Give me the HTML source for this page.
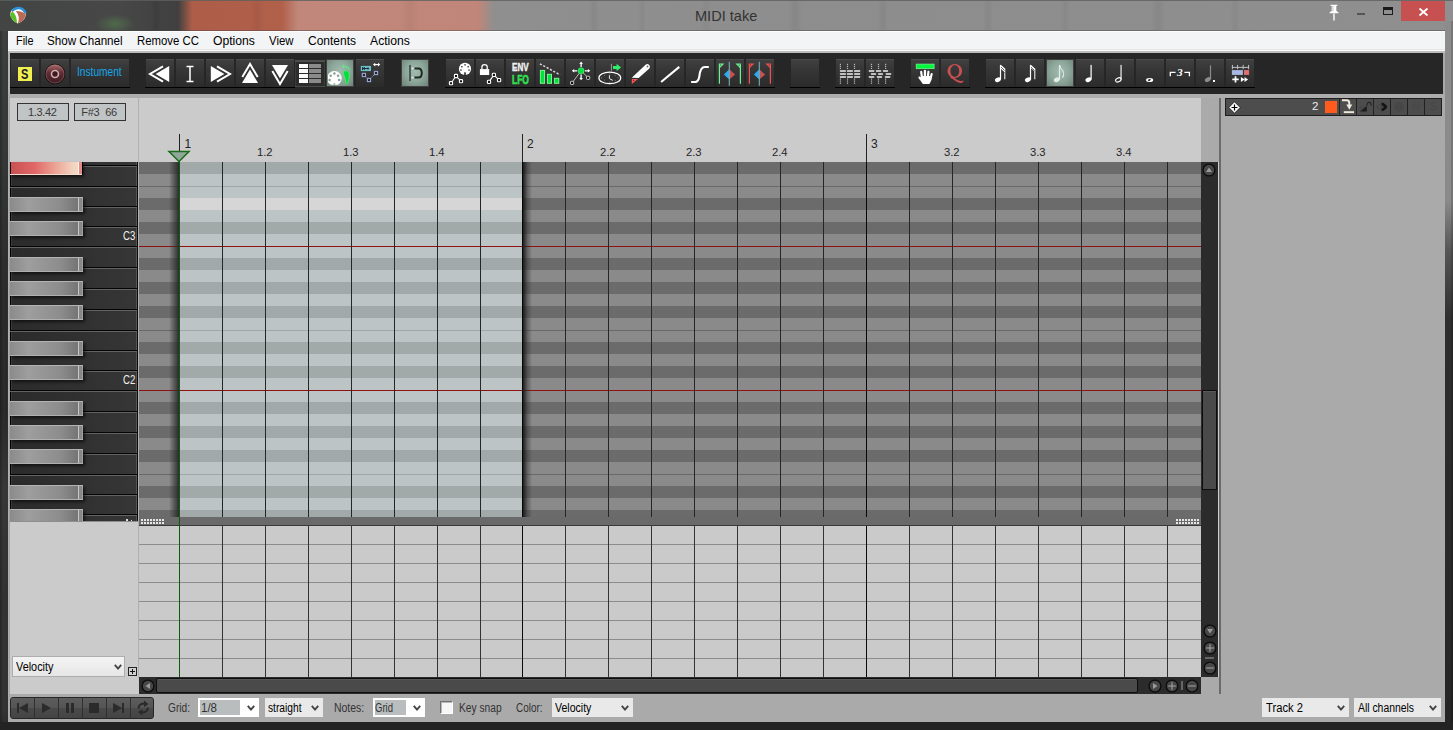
<!DOCTYPE html><html><head><meta charset="utf-8"><style>
*{margin:0;padding:0;box-sizing:border-box}
html,body{width:1453px;height:730px;overflow:hidden;background:#262626;font-family:"Liberation Sans",sans-serif}
.a{position:absolute}
.t{position:absolute;white-space:pre;line-height:1}
svg{position:absolute;overflow:visible}
.btn{position:absolute;height:28px;background:linear-gradient(#404040,#373737 35%,#2b2b2b);box-shadow:inset 0 1px 0 #4b4b4b}
.act{position:absolute;background:radial-gradient(ellipse at 50% 45%,#a3bcb0 0,#8ea79b 50%,#6d8278 100%);box-shadow:0 0 0 1px #404040}
</style></head><body><div class="a" style="left:0;top:0;width:1453px;height:31px;background:linear-gradient(90deg,#424543 0,#474747 120px,#404040 178px,#ad5d48 192px,#b1604a 282px,#c0877a 298px,#c08679 478px,#8f8f8f 494px,#8d8d8d 900px,#8f8f8f 1453px)"></div><div class="a" style="left:0;top:0;width:1453px;height:1px;background:#5c605e;opacity:.8"></div><div class="a" style="left:589px;top:1px;width:10px;height:29px;background:linear-gradient(90deg,rgba(0,0,0,0),rgba(0,0,0,0.05),rgba(0,0,0,0))"></div><div class="a" style="left:638px;top:1px;width:8px;height:29px;background:linear-gradient(90deg,rgba(0,0,0,0),rgba(0,0,0,0.04),rgba(0,0,0,0))"></div><div class="a" style="left:700px;top:1px;width:12px;height:29px;background:linear-gradient(90deg,rgba(0,0,0,0),rgba(0,0,0,0.03),rgba(0,0,0,0))"></div><div class="a" style="left:788px;top:1px;width:14px;height:29px;background:linear-gradient(90deg,rgba(0,0,0,0),rgba(0,0,0,0.05),rgba(0,0,0,0))"></div><div class="a" style="left:878px;top:1px;width:10px;height:29px;background:linear-gradient(90deg,rgba(0,0,0,0),rgba(0,0,0,0.05),rgba(0,0,0,0))"></div><div class="a" style="left:982px;top:1px;width:12px;height:29px;background:linear-gradient(90deg,rgba(0,0,0,0),rgba(0,0,0,0.04),rgba(0,0,0,0))"></div><div class="a" style="left:1060px;top:1px;width:10px;height:29px;background:linear-gradient(90deg,rgba(0,0,0,0),rgba(0,0,0,0.04),rgba(0,0,0,0))"></div><div class="a" style="left:1150px;top:1px;width:16px;height:29px;background:linear-gradient(90deg,rgba(0,0,0,0),rgba(0,0,0,0.05),rgba(0,0,0,0))"></div><div class="a" style="left:1230px;top:1px;width:10px;height:29px;background:linear-gradient(90deg,rgba(0,0,0,0),rgba(0,0,0,0.04),rgba(0,0,0,0))"></div><div class="a" style="left:150px;top:1px;width:12px;height:29px;background:linear-gradient(90deg,rgba(0,0,0,0),rgba(0,0,0,0.08),rgba(0,0,0,0))"></div><div class="a" style="left:250px;top:1px;width:14px;height:29px;background:linear-gradient(90deg,rgba(0,0,0,0),rgba(0,0,0,0.05),rgba(0,0,0,0))"></div><div class="a" style="left:400px;top:1px;width:20px;height:29px;background:linear-gradient(90deg,rgba(0,0,0,0),rgba(0,0,0,0.04),rgba(0,0,0,0))"></div><div class="a" style="left:95px;top:14px;width:40px;height:20px;border-radius:50%;background:radial-gradient(ellipse,#4f6a4a 0,rgba(70,90,70,0) 70%)"></div><div class="t" style="left:694.80px;top:8.50px;font-size:14.30px;font-family:'Liberation Sans',sans-serif;font-weight:normal;font-style:normal;color:#333;transform:scaleX(1.018);transform-origin:0 0;">MIDI take</div><svg style="left:10px;top:6.5px;" width="16" height="17" viewBox="0 0 16 17"><path d="M0.3 8 Q0.3 0.8 8 0.6 Q15.8 0.8 15.8 8 Q15 13.5 7.7 16.6 Q1 13 0.3 8Z" fill="#fff"/><path d="M1.6 4.2 Q5 0.9 8.5 1 Q13.5 1.2 15.6 6.3" stroke="#2a90d8" stroke-width="2.3" fill="none"/><path d="M0.3 8.6 Q0.6 5.5 2.3 4.6 Q6.6 7.5 7.1 16.2 Q1.2 13 0.3 8.6Z" fill="#5bbf2a"/><path d="M5.8 3.9 Q11.8 3.6 15.7 7.2 Q15 13.8 7.8 16.6 Q10.6 9.5 5.8 3.9Z" fill="#bd6a55"/><path d="M1.8 4.6 L3 4.1 L3.4 5.4Z" fill="#c87a20"/></svg><svg style="left:1326px;top:3px;" width="16" height="18" viewBox="0 0 16 18"><path d="M4.2 1.5 H11.8 V3 H10.6 V7.8 L12.8 9.6 V10.6 H3.2 V9.6 L5.4 7.8 V3 H4.2Z" fill="#fff" stroke="#777" stroke-width="0.4"/><path d="M8 10.6 V17.5" stroke="#fff" stroke-width="1.4"/><path d="M6.9 3 V8.5" stroke="#999" stroke-width="0.6"/></svg><div class="a" style="left:1357px;top:13px;width:8px;height:2px;background:#555"></div><div class="a" style="left:1383px;top:7px;width:10px;height:8px;border:1.5px solid #1a1a1a;border-top-width:3px"></div><div class="a" style="left:1401px;top:1px;width:44px;height:20px;background:#c75050"></div><svg style="left:1419px;top:7.5px;" width="9" height="8" viewBox="0 0 9 8"><path d="M0.5 0.5 L8.5 7.5 M8.5 0.5 L0.5 7.5" stroke="#fff" stroke-width="1.7"/></svg><div class="a" style="left:0px;top:31px;width:8px;height:699px;background:linear-gradient(90deg,rgba(0,0,0,.25),rgba(0,0,0,0) 40%,rgba(0,0,0,0) 75%,rgba(0,0,0,.3)),linear-gradient(#3d403e,#363937 120px,#2c2c2c 260px,#2a2a2a 380px,#383838 460px,#333 560px,#343434 680px,#2a2a2a)"></div><div class="a" style="left:7px;top:31px;width:1px;height:691px;background:rgba(255,255,255,.06)"></div><div class="a" style="left:1445px;top:21px;width:8px;height:709px;background:linear-gradient(#8c8c8c,#8a8a8a 180px,#555 230px,#2e2e2e 300px,#252525)"></div><div class="a" style="left:1451px;top:21px;width:2px;height:709px;background:rgba(0,0,0,.15)"></div><div class="a" style="left:0px;top:722px;width:1453px;height:8px;background:#232323"></div><div class="a" style="left:8px;top:31px;width:1437px;height:691px;background:#cbcbcb"></div><div class="a" style="left:8px;top:31px;width:1437px;height:18px;background:#f3f4f6"></div><div class="a" style="left:8px;top:30px;width:1437px;height:1px;background:rgba(70,70,70,.45)"></div><div class="a" style="left:8px;top:31px;width:1437px;height:1px;background:#fcfcfc"></div><div class="a" style="left:8px;top:49px;width:1437px;height:1px;background:#e6e6e6"></div><div class="a" style="left:8px;top:50px;width:1437px;height:1px;background:#fafafa"></div><div class="a" style="left:8px;top:51px;width:1437px;height:2px;background:#bdbdbd"></div><div class="t" style="left:15.60px;top:34.77px;font-size:12.20px;font-family:'Liberation Sans',sans-serif;font-weight:normal;font-style:normal;color:#000;transform:scaleX(0.890);transform-origin:0 0;">File</div><div class="t" style="left:47.00px;top:34.77px;font-size:12.20px;font-family:'Liberation Sans',sans-serif;font-weight:normal;font-style:normal;color:#000;transform:scaleX(0.954);transform-origin:0 0;">Show Channel</div><div class="t" style="left:137.00px;top:34.77px;font-size:12.20px;font-family:'Liberation Sans',sans-serif;font-weight:normal;font-style:normal;color:#000;transform:scaleX(0.933);transform-origin:0 0;">Remove CC</div><div class="t" style="left:213.00px;top:34.77px;font-size:12.20px;font-family:'Liberation Sans',sans-serif;font-weight:normal;font-style:normal;color:#000;transform:scaleX(0.999);transform-origin:0 0;">Options</div><div class="t" style="left:269.00px;top:34.77px;font-size:12.20px;font-family:'Liberation Sans',sans-serif;font-weight:normal;font-style:normal;color:#000;transform:scaleX(0.933);transform-origin:0 0;">View</div><div class="t" style="left:308.00px;top:34.77px;font-size:12.20px;font-family:'Liberation Sans',sans-serif;font-weight:normal;font-style:normal;color:#000;transform:scaleX(0.983);transform-origin:0 0;">Contents</div><div class="t" style="left:370.00px;top:34.77px;font-size:12.20px;font-family:'Liberation Sans',sans-serif;font-weight:normal;font-style:normal;color:#000;transform:scaleX(1.000);transform-origin:0 0;">Actions</div><div class="a" style="left:8px;top:53px;width:2px;height:45px;background:#b3b3b3"></div><div class="a" style="left:10px;top:53px;width:1433px;height:41px;background:#262626"></div><div class="a" style="left:1443px;top:53px;width:2px;height:45px;background:#a9a9a9"></div><div class="a" style="left:8px;top:94px;width:1437px;height:4px;background:#acacac"></div><div class="a" style="left:10px;top:87px;width:120px;height:1px;background:#000"></div><div class="btn" style="left:11px;top:59px;width:28px;height:28px"></div><div class="btn" style="left:41px;top:59px;width:28px;height:28px"></div><div class="btn" style="left:71px;top:59px;width:58px;height:28px"></div><div class="a" style="left:18px;top:67px;width:14px;height:14px;background:#f0ee50"></div><div class="t" style="left:21.10px;top:66.96px;font-size:14.11px;font-family:'Liberation Sans',sans-serif;font-weight:bold;font-style:normal;color:#1c1c28;transform:scaleX(0.786);transform-origin:0 0;">S</div><svg style="left:45px;top:63.7px;" width="20" height="20" viewBox="0 0 20 20"><defs><linearGradient id="rg1" x1="0" y1="0" x2="0" y2="1"><stop offset="0" stop-color="#a86868"/><stop offset="0.45" stop-color="#5e2c32"/><stop offset="1" stop-color="#3e1c22"/></linearGradient></defs><circle cx="10" cy="10" r="10.3" fill="#141414"/><circle cx="10" cy="10" r="9.4" fill="url(#rg1)"/><circle cx="10" cy="10" r="9" fill="none" stroke="rgba(230,160,160,.35)" stroke-width="0.8"/><circle cx="10" cy="10" r="3.5" fill="#42181e" stroke="#cfb0b0" stroke-width="1.6"/></svg><div class="t" style="left:76.90px;top:66.19px;font-size:12.65px;font-family:'Liberation Sans',sans-serif;font-weight:normal;font-style:normal;color:#14a8ea;transform:scaleX(0.804);transform-origin:0 0;">Instument</div><div class="a" style="left:145px;top:87px;width:150px;height:1px;background:#000"></div><div class="btn" style="left:146px;top:59px;width:28px;height:28px"></div><div class="btn" style="left:176px;top:59px;width:28px;height:28px"></div><div class="btn" style="left:206px;top:59px;width:28px;height:28px"></div><div class="btn" style="left:236px;top:59px;width:28px;height:28px"></div><div class="btn" style="left:266px;top:59px;width:28px;height:28px"></div><svg style="left:146px;top:59px;" width="28" height="28" viewBox="0 0 28 28"><path d="M17 7.3 L4 15 L17 22.7" stroke="#fff" stroke-width="2" fill="none"/><path d="M9.6 15 L23.2 7 L23.2 23Z" fill="#fff"/></svg><svg style="left:176px;top:59px;" width="28" height="28" viewBox="0 0 28 28"><path d="M10.5 7.6h7M10.5 22.5h7M14 7.6v14.9" stroke="#fff" stroke-width="1.5" fill="none"/></svg><svg style="left:206px;top:59px;" width="28" height="28" viewBox="0 0 28 28"><path d="M11 7.3 L24 15 L11 22.7" stroke="#fff" stroke-width="2" fill="none"/><path d="M18.4 15 L4.8 7 L4.8 23Z" fill="#fff"/></svg><svg style="left:236px;top:59px;" width="28" height="28" viewBox="0 0 28 28"><path d="M6.3 18 L14 5 L21.7 18" stroke="#fff" stroke-width="2" fill="none"/><path d="M14 10.5 L6 24 L22 24Z" fill="#fff"/></svg><svg style="left:266px;top:59px;" width="28" height="28" viewBox="0 0 28 28"><path d="M6.3 12 L14 25 L21.7 12" stroke="#fff" stroke-width="2" fill="none"/><path d="M14 19.5 L6 6 L22 6Z" fill="#fff"/></svg><div class="a" style="left:295px;top:60px;width:30px;height:27px;background:#2c2c2c;border-top:2px solid #4e4e4e;border-bottom:1px solid #4a4a4a;box-shadow:inset 1px 0 #3a3a3a,inset -1px 0 #3a3a3a"></div><div class="a" style="left:299px;top:64px;width:9px;height:4px;background:#fff"></div><div class="a" style="left:309px;top:64px;width:12px;height:4px;background:#8a8a8a"></div><div class="a" style="left:299px;top:69px;width:9px;height:4px;background:#fff"></div><div class="a" style="left:309px;top:69px;width:12px;height:4px;background:#8a8a8a"></div><div class="a" style="left:299px;top:74px;width:9px;height:4px;background:#fff"></div><div class="a" style="left:309px;top:74px;width:12px;height:4px;background:#8a8a8a"></div><div class="a" style="left:299px;top:79px;width:9px;height:4px;background:#fff"></div><div class="a" style="left:309px;top:79px;width:12px;height:4px;background:#8a8a8a"></div><div class="act" style="left:327px;top:60px;width:26px;height:26px"></div><svg style="left:327px;top:60px;" width="26" height="26" viewBox="0 0 26 26"><defs><clipPath id="cpf"><rect x="1" y="0" width="25" height="24.8"/></clipPath></defs><g clip-path="url(#cpf)"><circle cx="7.4" cy="18.4" r="7.3" fill="#fff"/><g fill="#84a092"><circle cx="7.4" cy="13.4" r="1.25"/><circle cx="3.7" cy="15.8" r="1.25"/><circle cx="11.1" cy="15.8" r="1.25"/><circle cx="2.6" cy="20" r="1.25"/><circle cx="12.2" cy="20" r="1.25"/><rect x="6.6" y="23.3" width="1.6" height="2"/></g></g><path d="M16.5 12 Q17 10.5 19.5 10.8 Q22.5 11.5 22.3 15 Q22 20 20.5 23.3 Q19.6 24.6 18.9 23.4 Q18.5 19 17.5 16.5 Q16.2 14 16.5 12Z" fill="#00e23a" stroke="#55f07a" stroke-width="0.6"/><g fill="#5ee88a"><ellipse cx="16.6" cy="6.4" rx="1.2" ry="1.8"/><ellipse cx="19.4" cy="7" rx="0.8" ry="1.4"/><ellipse cx="21.2" cy="7.9" rx="0.7" ry="1.2"/><ellipse cx="23" cy="9.2" rx="0.6" ry="1"/></g></svg><div class="btn" style="left:356px;top:59px;width:28px;height:28px"></div><svg style="left:356px;top:59px;" width="28" height="28" viewBox="0 0 28 28"><rect x="4.8" y="6.9" width="10.2" height="5.2" fill="#6cc0cc"/><path d="M6.6 9.5 h6.2 M6.6 8 v3 M8.3 8 v3" stroke="#1a2a30" stroke-width="1" fill="none"/><path d="M11.6 8 l1.8 1.5 -1.8 1.5z" fill="#1a2a30"/><path d="M18 5.6 h5.2" stroke="#fff" stroke-width="1.2"/><path d="M17 5.6 l2.2 -1.8 v3.6z M24.2 5.6 l-2.2 -1.8 v3.6z" fill="#fff"/><path d="M9.5 17.5 L11.5 19.5 M14.5 19.5 L18.5 15.5" stroke="#9aa6d8" stroke-width="1" stroke-dasharray="1 0.8"/><rect x="6.3" y="14.4" width="3.2" height="3.2" fill="#222" stroke="#9aa6d8" stroke-width="1.1"/><rect x="11.4" y="19.4" width="3.2" height="3.2" fill="#222" stroke="#9aa6d8" stroke-width="1.1"/><rect x="18.4" y="12.4" width="3.2" height="3.2" fill="#222" stroke="#9aa6d8" stroke-width="1.1"/></svg><div class="act" style="left:402px;top:60px;width:26px;height:26px"></div><svg style="left:402px;top:60px;" width="26" height="26" viewBox="0 0 26 26"><path d="M8 5v16" stroke="#3a4843" stroke-width="1.6"/><path d="M12.5 8.4 H16.5 Q19.8 8.4 19.8 13 Q19.8 17.6 16.5 17.6 H12.5" stroke="#1e2a26" stroke-width="2" fill="none"/><rect x="9.6" y="7.6" width="2" height="1.6" fill="#eee"/><rect x="9.6" y="16.8" width="2" height="1.6" fill="#eee"/></svg><div class="a" style="left:445px;top:87px;width:330px;height:1px;background:#000"></div><div class="btn" style="left:446px;top:59px;width:28px;height:28px"></div><div class="btn" style="left:476px;top:59px;width:28px;height:28px"></div><div class="btn" style="left:506px;top:59px;width:28px;height:28px"></div><div class="btn" style="left:536px;top:59px;width:28px;height:28px"></div><div class="btn" style="left:566px;top:59px;width:28px;height:28px"></div><div class="btn" style="left:596px;top:59px;width:28px;height:28px"></div><div class="btn" style="left:626px;top:59px;width:28px;height:28px"></div><div class="btn" style="left:656px;top:59px;width:28px;height:28px"></div><div class="btn" style="left:686px;top:59px;width:28px;height:28px"></div><div class="btn" style="left:716px;top:59px;width:28px;height:28px"></div><div class="btn" style="left:746px;top:59px;width:28px;height:28px"></div><svg style="left:446px;top:59px;" width="28" height="28" viewBox="0 0 28 28"><circle cx="19" cy="9.9" r="6.1" fill="#fff"/><g fill="#111"><rect x="18.4" y="5.2" width="1.3" height="1.3"/><rect x="15.2" y="7.1" width="1.3" height="1.3"/><rect x="21.5" y="7.1" width="1.3" height="1.3"/><rect x="14.3" y="10.4" width="1.3" height="1.3"/><rect x="22.4" y="10.4" width="1.3" height="1.3"/><rect x="18.3" y="13.3" width="1.4" height="3"/></g><path d="M5 24.2 L10 17 L15 22.2" stroke="#fff" stroke-width="1.1" fill="none"/><rect x="3.4" y="22.599999999999998" width="3.2" height="3.2" rx="0.8" fill="#111" stroke="#fff" stroke-width="1.1"/><rect x="8.4" y="15.4" width="3.2" height="3.2" rx="0.8" fill="#111" stroke="#fff" stroke-width="1.1"/><rect x="13.4" y="20.599999999999998" width="3.2" height="3.2" rx="0.8" fill="#111" stroke="#fff" stroke-width="1.1"/></svg><svg style="left:476px;top:59px;" width="28" height="28" viewBox="0 0 28 28"><rect x="3.9" y="10.1" width="9.3" height="5.9" fill="#fff"/><path d="M5.9 10.5 V8 Q5.9 5.6 8.55 5.6 Q11.2 5.6 11.2 8 V10.5" stroke="#fff" stroke-width="1.3" fill="none"/><path d="M13 22.9 L17.9 15.9 L23.1 21.1" stroke="#fff" stroke-width="1.1" fill="none"/><rect x="11.4" y="21.299999999999997" width="3.2" height="3.2" rx="0.8" fill="#111" stroke="#fff" stroke-width="1.1"/><rect x="16.299999999999997" y="14.3" width="3.2" height="3.2" rx="0.8" fill="#111" stroke="#fff" stroke-width="1.1"/><rect x="21.5" y="19.5" width="3.2" height="3.2" rx="0.8" fill="#111" stroke="#fff" stroke-width="1.1"/></svg><div class="t" style="left:511.50px;top:61.77px;font-size:11.49px;font-family:'Liberation Sans',sans-serif;font-weight:bold;font-style:normal;color:#f0f0f0;transform:scaleX(0.703);transform-origin:0 0;-webkit-text-stroke:0.5px #f0f0f0">ENV</div><div class="t" style="left:511.80px;top:73.56px;font-size:12.80px;font-family:'Liberation Sans',sans-serif;font-weight:bold;font-style:normal;color:#2ee050;transform:scaleX(0.660);transform-origin:0 0;-webkit-text-stroke:0.6px #2ee050">LFO</div><svg style="left:536px;top:59px;" width="28" height="28" viewBox="0 0 28 28"><path d="M3.9 4.8 L24 15.8" stroke="#d8d8d8" stroke-width="1.5" stroke-dasharray="2.2 1.6"/><rect x="4.4" y="11.4" width="4.2" height="12.9" fill="#00e23c" stroke="#7cf590" stroke-width="1"/><rect x="11.4" y="15.3" width="4.1" height="9" fill="#00e23c" stroke="#7cf590" stroke-width="1"/><rect x="18.4" y="19.3" width="4.4" height="5" fill="#00e23c" stroke="#7cf590" stroke-width="1"/></svg><svg style="left:566px;top:59px;" width="28" height="28" viewBox="0 0 28 28"><path d="M6.1 23.9 L15.1 11.8 L22.1 18.8" stroke="#bbb" stroke-width="1" fill="none"/><rect x="4.5" y="22.299999999999997" width="3.2" height="3.2" rx="0.7" fill="#111" stroke="#ccc" stroke-width="1"/><rect x="20.5" y="17.2" width="3.2" height="3.2" rx="0.7" fill="#111" stroke="#ccc" stroke-width="1"/><circle cx="15.1" cy="11.8" r="3" fill="#00e23c" stroke="#6cf08a" stroke-width="0.6"/><g stroke="#fff" stroke-width="1.3" fill="none"><path d="M15.1 8 V4.5 M15.1 15.6 V19.5 M11.3 11.8 H7.8 M18.9 11.8 H22.4"/></g><g fill="#fff"><path d="M15.1 2.6 l-1.8 2.4 h3.6z M15.1 21.3 l-1.8 -2.4 h3.6z M5.8 11.8 l2.4 -1.8 v3.6z M24.3 11.8 l-2.4 -1.8 v3.6z"/></g></svg><svg style="left:596px;top:59px;" width="28" height="28" viewBox="0 0 28 28"><ellipse cx="13.8" cy="18.9" rx="10.9" ry="5.8" fill="none" stroke="#fff" stroke-width="1.2"/><path d="M13.4 16.2 V19.6 L16.8 21.4" stroke="#fff" stroke-width="0.9" fill="none"/><g stroke="#bbb" stroke-width="0.7"><path d="M13.8 14.2v1 M13.8 22.6v1 M5.2 18.9h1 M21.4 18.9h1 M8 16.3l.7.5 M19.6 16.3l-.7.5 M8 21.5l.7-.5 M19.6 21.5l-.7-.5"/></g><path d="M15.4 4.8 V11.8" stroke="#aaa" stroke-width="0.9"/><path d="M17 6.9 H20.6 V4.8 L25.1 8.45 L20.6 12.1 V10 H17Z" fill="#2ef068"/></svg><svg style="left:626px;top:59px;" width="28" height="28" viewBox="0 0 28 28"><path d="M5.8 18.8 L19.6 5.8 Q21.5 4.3 23.2 5.9 Q24.8 7.6 23.3 9.4 L12.6 19.1Z" fill="#fff"/><circle cx="21.5" cy="7.5" r="0.9" fill="#666"/><path d="M5.8 20 H12 L5.8 25.1Z" fill="#f05a5a"/><circle cx="7.6" cy="21.4" r="0.6" fill="#c00"/></svg><svg style="left:656px;top:59px;" width="28" height="28" viewBox="0 0 28 28"><path d="M5.1 23 L23.3 7.9" stroke="#fff" stroke-width="2.1"/></svg><svg style="left:686px;top:59px;" width="28" height="28" viewBox="0 0 28 28"><path d="M5.1 23 H9.1 Q12.6 23 13.4 17 Q14.4 8 18.8 8 H22.8" stroke="#fff" stroke-width="2.1" fill="none"/></svg><svg style="left:716px;top:59px;" width="28" height="28" viewBox="0 0 28 28"><path d="M3.4 5.1v19.7 M24.4 5.1v19.7" stroke="#6cf090" stroke-width="1.2"/><path d="M2.8 4.6 h5.6 l-5 4.8Z M25 4.6 h-5.6 l5 4.8Z" fill="#6cf090"/><circle cx="4.6" cy="6" r="0.55" fill="#222"/><circle cx="23.2" cy="6" r="0.55" fill="#222"/><path d="M13.3 10.3 L7.9 15.45 L13.3 20.6Z" fill="#2ea8f0"/><path d="M13.3 10.3 L19.1 15.45 L13.3 20.6Z" fill="#c85050"/><path d="M13.3 2.7v24" stroke="#72b2b8" stroke-width="1.1"/></svg><svg style="left:746px;top:59px;" width="28" height="28" viewBox="0 0 28 28"><path d="M3.4 5.1v19.7 M24.4 5.1v19.7" stroke="#f05050" stroke-width="1.2"/><path d="M2.8 4.6 h5.6 l-5 4.8Z M25 4.6 h-5.6 l5 4.8Z" fill="#f05050"/><circle cx="4.6" cy="6" r="0.55" fill="#222"/><circle cx="23.2" cy="6" r="0.55" fill="#222"/><path d="M13.3 10.3 L7.9 15.45 L13.3 20.6Z" fill="#2ea8f0"/><path d="M13.3 10.3 L19.1 15.45 L13.3 20.6Z" fill="#c85050"/><path d="M13.3 2.7v24" stroke="#72b2b8" stroke-width="1.1"/></svg><div class="a" style="left:790px;top:87px;width:30px;height:1px;background:#000"></div><div class="btn" style="left:791px;top:59px;width:28px;height:28px"></div><div class="a" style="left:835px;top:87px;width:60px;height:1px;background:#000"></div><div class="btn" style="left:836px;top:59px;width:28px;height:28px"></div><div class="btn" style="left:866px;top:59px;width:28px;height:28px"></div><svg style="left:836px;top:59px;" width="28" height="28" viewBox="0 0 28 28"><rect x="3.8" y="4.8" width="1.2" height="1.2" fill="#b8b8b8"/><rect x="3.8" y="6.8" width="1.2" height="1.2" fill="#b8b8b8"/><rect x="3.8" y="8.8" width="1.2" height="1.2" fill="#b8b8b8"/><rect x="3.8" y="19.5" width="1.2" height="1.2" fill="#b8b8b8"/><rect x="3.8" y="21.5" width="1.2" height="1.2" fill="#b8b8b8"/><rect x="3.8" y="23.6" width="1.2" height="1.2" fill="#b8b8b8"/><rect x="10.9" y="4.8" width="1.2" height="1.2" fill="#b8b8b8"/><rect x="10.9" y="6.8" width="1.2" height="1.2" fill="#b8b8b8"/><rect x="10.9" y="8.8" width="1.2" height="1.2" fill="#b8b8b8"/><rect x="10.9" y="19.5" width="1.2" height="1.2" fill="#b8b8b8"/><rect x="10.9" y="21.5" width="1.2" height="1.2" fill="#b8b8b8"/><rect x="10.9" y="23.6" width="1.2" height="1.2" fill="#b8b8b8"/><rect x="17.9" y="4.8" width="1.2" height="1.2" fill="#b8b8b8"/><rect x="17.9" y="6.8" width="1.2" height="1.2" fill="#b8b8b8"/><rect x="17.9" y="8.8" width="1.2" height="1.2" fill="#b8b8b8"/><rect x="17.9" y="19.5" width="1.2" height="1.2" fill="#b8b8b8"/><rect x="17.9" y="21.5" width="1.2" height="1.2" fill="#b8b8b8"/><rect x="17.9" y="23.6" width="1.2" height="1.2" fill="#b8b8b8"/><rect x="3.9" y="11" width="6.1" height="2" rx="0.4" fill="#c0c0c0"/><rect x="10.9" y="11" width="6.1" height="2" rx="0.4" fill="#c0c0c0"/><rect x="18" y="11" width="6.2" height="2" rx="0.4" fill="#c0c0c0"/><rect x="3.9" y="14" width="6.1" height="2" rx="0.4" fill="#c0c0c0"/><rect x="10.9" y="14" width="6.1" height="2" rx="0.4" fill="#c0c0c0"/><rect x="18" y="14" width="6.2" height="2" rx="0.4" fill="#c0c0c0"/><rect x="3.9" y="17" width="6.1" height="2" rx="0.4" fill="#c0c0c0"/><rect x="10.9" y="17" width="6.1" height="2" rx="0.4" fill="#c0c0c0"/><rect x="18" y="17" width="6.2" height="2" rx="0.4" fill="#c0c0c0"/></svg><svg style="left:866px;top:59px;" width="28" height="28" viewBox="0 0 28 28"><rect x="4.9" y="4.8" width="1.2" height="1.2" fill="#b8b8b8"/><rect x="4.9" y="6.8" width="1.2" height="1.2" fill="#b8b8b8"/><rect x="4.9" y="8.8" width="1.2" height="1.2" fill="#b8b8b8"/><rect x="4.9" y="19.5" width="1.2" height="1.2" fill="#b8b8b8"/><rect x="4.9" y="21.5" width="1.2" height="1.2" fill="#b8b8b8"/><rect x="4.9" y="23.6" width="1.2" height="1.2" fill="#b8b8b8"/><rect x="11.9" y="4.8" width="1.2" height="1.2" fill="#b8b8b8"/><rect x="11.9" y="6.8" width="1.2" height="1.2" fill="#b8b8b8"/><rect x="11.9" y="8.8" width="1.2" height="1.2" fill="#b8b8b8"/><rect x="11.9" y="19.5" width="1.2" height="1.2" fill="#b8b8b8"/><rect x="11.9" y="21.5" width="1.2" height="1.2" fill="#b8b8b8"/><rect x="11.9" y="23.6" width="1.2" height="1.2" fill="#b8b8b8"/><rect x="19.0" y="4.8" width="1.2" height="1.2" fill="#b8b8b8"/><rect x="19.0" y="6.8" width="1.2" height="1.2" fill="#b8b8b8"/><rect x="19.0" y="8.8" width="1.2" height="1.2" fill="#b8b8b8"/><rect x="19.0" y="19.5" width="1.2" height="1.2" fill="#b8b8b8"/><rect x="19.0" y="21.5" width="1.2" height="1.2" fill="#b8b8b8"/><rect x="19.0" y="23.6" width="1.2" height="1.2" fill="#b8b8b8"/><rect x="2.8" y="11" width="5.5" height="2" rx="0.4" fill="#c0c0c0"/><rect x="9.9" y="11" width="5.3" height="2" rx="0.4" fill="#c0c0c0"/><rect x="16.9" y="11" width="5.2" height="2" rx="0.4" fill="#c0c0c0"/><rect x="4.9" y="14" width="5.2" height="2" rx="0.4" fill="#c0c0c0"/><rect x="12" y="14" width="5.0" height="2" rx="0.4" fill="#c0c0c0"/><rect x="19.8" y="14" width="5.4" height="2" rx="0.4" fill="#c0c0c0"/><rect x="2.8" y="17" width="5.5" height="2" rx="0.4" fill="#c0c0c0"/><rect x="10.8" y="17" width="5.3" height="2" rx="0.4" fill="#c0c0c0"/><rect x="18.9" y="17" width="5.4" height="2" rx="0.4" fill="#c0c0c0"/></svg><div class="a" style="left:910px;top:87px;width:60px;height:1px;background:#000"></div><div class="btn" style="left:911px;top:59px;width:28px;height:28px"></div><div class="btn" style="left:941px;top:59px;width:28px;height:28px"></div><svg style="left:911px;top:59px;" width="28" height="28" viewBox="0 0 28 28"><rect x="5.2" y="5.1" width="17.9" height="4.6" fill="#00f83c" stroke="#7af598" stroke-width="0.7"/><g fill="#fff"><rect x="9.5" y="11.8" width="2.2" height="10" rx="1.1" transform="rotate(-8 10.6 16)"/><rect x="12.8" y="10.8" width="2.3" height="10" rx="1.15"/><rect x="16" y="11.6" width="2.2" height="10" rx="1.1" transform="rotate(6 17 16)"/><rect x="18.9" y="14" width="2.1" height="8" rx="1.05" transform="rotate(14 20 18)"/><path d="M10 17 H20.5 Q20.8 21 19.5 23 L18.4 25 H12 Q10.5 23.5 9.8 22 L7.6 19.2 Q7 18 8 17.6 Q9 17.3 10 18.3Z"/></g></svg><svg style="left:941px;top:59px;" width="28" height="28" viewBox="0 0 28 28"><path fill-rule="evenodd" fill="#c85050" d="M13.8 5.1 A7.3 6.9 0 1 1 13.79 5.1Z M13.8 6.1 A4.4 5.9 0 1 0 13.81 6.1Z"/><path d="M9.6 17.8 Q11.8 18.6 13.6 20.2 Q16.5 22.6 19.5 23 Q21 23.2 22 22" stroke="#c85050" stroke-width="1.8" fill="none"/></svg><div class="a" style="left:985px;top:87px;width:270px;height:1px;background:#000"></div><div class="btn" style="left:986px;top:59px;width:28px;height:28px"></div><div class="btn" style="left:1016px;top:59px;width:28px;height:28px"></div><div class="btn" style="left:1076px;top:59px;width:28px;height:28px"></div><div class="btn" style="left:1106px;top:59px;width:28px;height:28px"></div><div class="btn" style="left:1136px;top:59px;width:28px;height:28px"></div><div class="btn" style="left:1166px;top:59px;width:28px;height:28px"></div><div class="btn" style="left:1196px;top:59px;width:28px;height:28px"></div><div class="btn" style="left:1226px;top:59px;width:28px;height:28px"></div><div class="act" style="left:1047px;top:60px;width:26px;height:26px"></div><svg style="left:986px;top:59px;" width="28" height="28" viewBox="0 0 28 28"><ellipse cx="11.9" cy="20.8" rx="3.1" ry="2.15" transform="rotate(-25 11.9 20.8)" fill="#fff"/><rect x="13.9" y="5.9" width="1.2" height="14.6" fill="#fff"/><path d="M15 5.9 L19.3 9.8 V20.2 H18.3 V13.2 L15 10.4Z" fill="#fff"/><path d="M15 8.1 L18.6 11.5 M15 10.3 L18.6 13.7" stroke="#333" stroke-width="0.8"/></svg><svg style="left:1016px;top:59px;" width="28" height="28" viewBox="0 0 28 28"><ellipse cx="11.9" cy="20.8" rx="3.1" ry="2.15" transform="rotate(-25 11.9 20.8)" fill="#fff"/><rect x="13.9" y="5.9" width="1.2" height="14.6" fill="#fff"/><path d="M15 5.9 L19.3 9.8 V20.2 H18.3 V12.2 L15 9.2Z" fill="#fff"/><path d="M15 8.3 L18.6 11.6" stroke="#333" stroke-width="0.8"/></svg><svg style="left:1046px;top:59px;" width="28" height="28" viewBox="0 0 28 28"><ellipse cx="10.8" cy="20.8" rx="3.1" ry="2.15" transform="rotate(-25 10.8 20.8)" fill="#e2ede8"/><rect x="12.9" y="6" width="1.2" height="14.6" fill="#e2ede8"/><path d="M13.6 6.2 Q14.2 9.2 16.4 11.3 Q18.4 13.3 17.6 16.3 Q17.2 17.6 16.3 18.6" stroke="#e2ede8" stroke-width="1.1" fill="none"/></svg><svg style="left:1076px;top:59px;" width="28" height="28" viewBox="0 0 28 28"><ellipse cx="12.4" cy="20.8" rx="3.1" ry="2.15" transform="rotate(-25 12.4 20.8)" fill="#fff"/><rect x="14.5" y="5.9" width="1.2" height="14.6" fill="#fff"/></svg><svg style="left:1106px;top:59px;" width="28" height="28" viewBox="0 0 28 28"><ellipse cx="12.3" cy="20.9" rx="2.9" ry="1.9" transform="rotate(-25 12.3 20.9)" fill="none" stroke="#fff" stroke-width="1.1"/><rect x="14.5" y="5.9" width="1.1" height="14.6" fill="#fff"/></svg><svg style="left:1136px;top:59px;" width="28" height="28" viewBox="0 0 28 28"><ellipse cx="13.6" cy="21" rx="3.6" ry="2.1" fill="#fff"/><ellipse cx="13.3" cy="21" rx="1.6" ry="1" transform="rotate(-30 13.3 21)" fill="#333"/></svg><svg style="left:1196px;top:59px;" width="28" height="28" viewBox="0 0 28 28"><ellipse cx="11.8" cy="20.6" rx="3.1" ry="2.15" transform="rotate(-25 11.8 20.6)" fill="#8c8c8c"/><rect x="13.9" y="6.3" width="1.2" height="14" fill="#8c8c8c"/><rect x="17" y="21" width="2" height="2" fill="#fff"/></svg><svg style="left:1166px;top:59px;" width="28" height="28" viewBox="0 0 28 28"><path d="M4.3 17.2 V13.4 H9.6 M23.4 17.2 V13.4 H18.4" stroke="#fff" stroke-width="1.3" fill="none"/></svg><div class="t" style="left:1177.01px;top:67.50px;font-size:9.92px;font-family:'Liberation Serif',serif;font-weight:bold;font-style:italic;color:#fff;transform:scaleX(1.146);transform-origin:0 0;">3</div><svg style="left:1226px;top:59px;" width="28" height="28" viewBox="0 0 28 28"><path d="M5.9 8.4 H23.1 M6.4 5.9 V10.2 M11.6 5.9 V10.2 M17.2 5.9 V10.2 M22.6 5.9 V10.2" stroke="#c0c0c0" stroke-width="1"/><rect x="5.9" y="11.1" width="11" height="4.8" fill="#a8b8e0"/><rect x="18" y="11.1" width="5.1" height="4.8" fill="#e07070"/><path d="M9.5 17.2 V23.6 M6.3 20.4 H12.7" stroke="#fff" stroke-width="1.7"/><path d="M14.9 17.9 L18.5 20.4 L14.9 22.9Z M18.5 17.9 L22.1 20.4 L18.5 22.9Z" fill="#fff"/></svg><div class="a" style="left:17px;top:103px;width:52px;height:18px;background:#c0c4c4;border:1px solid #333"></div><div class="t" style="left:27.90px;top:106.69px;font-size:11px;color:#3a3a3a;letter-spacing:-0.317px;">1.3.42</div><div class="a" style="left:74px;top:103px;width:52px;height:18px;background:#c0c4c4;border:1px solid #333"></div><div class="t" style="left:81.20px;top:106.69px;font-size:11px;color:#3a3a3a;letter-spacing:-0.217px;">F#3  66</div><div class="a" style="left:138px;top:98px;width:1px;height:580px;background:#b0b0b0"></div><div class="a" style="left:8px;top:98px;width:2px;height:596px;background:linear-gradient(90deg,#b4b4b4,#a2a2a2)"></div><div class="a" style="left:1201px;top:98px;width:18px;height:64px;background:#aaaaaa"></div><div class="a" style="left:1219px;top:98px;width:2px;height:596px;background:#6b6b6b"></div><div class="a" style="left:1221px;top:98px;width:224px;height:624px;background:#aaaaaa"></div><div class="a" style="left:179px;top:134px;width:1px;height:28px;background:#222"></div><div class="a" style="left:522px;top:134px;width:1px;height:28px;background:#222"></div><div class="a" style="left:866px;top:134px;width:1px;height:28px;background:#222"></div><div class="t" style="left:184.50px;top:137.84px;font-size:12px;color:#222;letter-spacing:0.000px;">1</div><div class="t" style="left:527.00px;top:137.84px;font-size:12px;color:#222;letter-spacing:0.000px;">2</div><div class="t" style="left:871.00px;top:137.84px;font-size:12px;color:#222;letter-spacing:0.000px;">3</div><div class="t" style="left:256.88px;top:148.23px;font-size:10.47px;font-family:'Liberation Sans',sans-serif;font-weight:normal;font-style:normal;color:#262626;transform:scaleX(1.072);transform-origin:0 0;">1.2</div><div class="t" style="left:342.75px;top:148.23px;font-size:10.47px;font-family:'Liberation Sans',sans-serif;font-weight:normal;font-style:normal;color:#262626;transform:scaleX(1.072);transform-origin:0 0;">1.3</div><div class="t" style="left:428.62px;top:148.23px;font-size:10.47px;font-family:'Liberation Sans',sans-serif;font-weight:normal;font-style:normal;color:#262626;transform:scaleX(1.072);transform-origin:0 0;">1.4</div><div class="t" style="left:600.38px;top:148.23px;font-size:10.47px;font-family:'Liberation Sans',sans-serif;font-weight:normal;font-style:normal;color:#262626;transform:scaleX(1.072);transform-origin:0 0;">2.2</div><div class="t" style="left:686.25px;top:148.23px;font-size:10.47px;font-family:'Liberation Sans',sans-serif;font-weight:normal;font-style:normal;color:#262626;transform:scaleX(1.072);transform-origin:0 0;">2.3</div><div class="t" style="left:772.12px;top:148.23px;font-size:10.47px;font-family:'Liberation Sans',sans-serif;font-weight:normal;font-style:normal;color:#262626;transform:scaleX(1.072);transform-origin:0 0;">2.4</div><div class="t" style="left:943.88px;top:148.23px;font-size:10.47px;font-family:'Liberation Sans',sans-serif;font-weight:normal;font-style:normal;color:#262626;transform:scaleX(1.072);transform-origin:0 0;">3.2</div><div class="t" style="left:1029.75px;top:148.23px;font-size:10.47px;font-family:'Liberation Sans',sans-serif;font-weight:normal;font-style:normal;color:#262626;transform:scaleX(1.072);transform-origin:0 0;">3.3</div><div class="t" style="left:1115.62px;top:148.23px;font-size:10.47px;font-family:'Liberation Sans',sans-serif;font-weight:normal;font-style:normal;color:#262626;transform:scaleX(1.072);transform-origin:0 0;">3.4</div><div class="a" style="left:139px;top:162px;width:40px;height:12px;background:#6b6b6b"></div><div class="a" style="left:179px;top:162px;width:344px;height:12px;background:#a1a9a9"></div><div class="a" style="left:523px;top:162px;width:678px;height:12px;background:#6b6b6b"></div><div class="a" style="left:139px;top:174px;width:40px;height:12px;background:#8a8a8a"></div><div class="a" style="left:179px;top:174px;width:344px;height:12px;background:#bcc4c5"></div><div class="a" style="left:523px;top:174px;width:678px;height:12px;background:#8a8a8a"></div><div class="a" style="left:139px;top:186px;width:40px;height:12px;background:#8a8a8a"></div><div class="a" style="left:179px;top:186px;width:344px;height:12px;background:#bcc4c5"></div><div class="a" style="left:523px;top:186px;width:678px;height:12px;background:#8a8a8a"></div><div class="a" style="left:139px;top:198px;width:40px;height:12px;background:#6b6b6b"></div><div class="a" style="left:179px;top:198px;width:344px;height:12px;background:#d6d6d6"></div><div class="a" style="left:523px;top:198px;width:678px;height:12px;background:#6b6b6b"></div><div class="a" style="left:139px;top:210px;width:40px;height:12px;background:#8a8a8a"></div><div class="a" style="left:179px;top:210px;width:344px;height:12px;background:#bcc4c5"></div><div class="a" style="left:523px;top:210px;width:678px;height:12px;background:#8a8a8a"></div><div class="a" style="left:139px;top:222px;width:40px;height:12px;background:#6b6b6b"></div><div class="a" style="left:179px;top:222px;width:344px;height:12px;background:#a1a9a9"></div><div class="a" style="left:523px;top:222px;width:678px;height:12px;background:#6b6b6b"></div><div class="a" style="left:139px;top:234px;width:40px;height:12px;background:#8a8a8a"></div><div class="a" style="left:179px;top:234px;width:344px;height:12px;background:#bcc4c5"></div><div class="a" style="left:523px;top:234px;width:678px;height:12px;background:#8a8a8a"></div><div class="a" style="left:139px;top:246px;width:40px;height:12px;background:#8a8a8a"></div><div class="a" style="left:179px;top:246px;width:344px;height:12px;background:#bcc4c5"></div><div class="a" style="left:523px;top:246px;width:678px;height:12px;background:#8a8a8a"></div><div class="a" style="left:139px;top:258px;width:40px;height:12px;background:#6b6b6b"></div><div class="a" style="left:179px;top:258px;width:344px;height:12px;background:#a1a9a9"></div><div class="a" style="left:523px;top:258px;width:678px;height:12px;background:#6b6b6b"></div><div class="a" style="left:139px;top:270px;width:40px;height:12px;background:#8a8a8a"></div><div class="a" style="left:179px;top:270px;width:344px;height:12px;background:#bcc4c5"></div><div class="a" style="left:523px;top:270px;width:678px;height:12px;background:#8a8a8a"></div><div class="a" style="left:139px;top:282px;width:40px;height:12px;background:#6b6b6b"></div><div class="a" style="left:179px;top:282px;width:344px;height:12px;background:#a1a9a9"></div><div class="a" style="left:523px;top:282px;width:678px;height:12px;background:#6b6b6b"></div><div class="a" style="left:139px;top:294px;width:40px;height:12px;background:#8a8a8a"></div><div class="a" style="left:179px;top:294px;width:344px;height:12px;background:#bcc4c5"></div><div class="a" style="left:523px;top:294px;width:678px;height:12px;background:#8a8a8a"></div><div class="a" style="left:139px;top:306px;width:40px;height:12px;background:#6b6b6b"></div><div class="a" style="left:179px;top:306px;width:344px;height:12px;background:#a1a9a9"></div><div class="a" style="left:523px;top:306px;width:678px;height:12px;background:#6b6b6b"></div><div class="a" style="left:139px;top:318px;width:40px;height:12px;background:#8a8a8a"></div><div class="a" style="left:179px;top:318px;width:344px;height:12px;background:#bcc4c5"></div><div class="a" style="left:523px;top:318px;width:678px;height:12px;background:#8a8a8a"></div><div class="a" style="left:139px;top:330px;width:40px;height:12px;background:#8a8a8a"></div><div class="a" style="left:179px;top:330px;width:344px;height:12px;background:#bcc4c5"></div><div class="a" style="left:523px;top:330px;width:678px;height:12px;background:#8a8a8a"></div><div class="a" style="left:139px;top:342px;width:40px;height:12px;background:#6b6b6b"></div><div class="a" style="left:179px;top:342px;width:344px;height:12px;background:#a1a9a9"></div><div class="a" style="left:523px;top:342px;width:678px;height:12px;background:#6b6b6b"></div><div class="a" style="left:139px;top:354px;width:40px;height:12px;background:#8a8a8a"></div><div class="a" style="left:179px;top:354px;width:344px;height:12px;background:#bcc4c5"></div><div class="a" style="left:523px;top:354px;width:678px;height:12px;background:#8a8a8a"></div><div class="a" style="left:139px;top:366px;width:40px;height:12px;background:#6b6b6b"></div><div class="a" style="left:179px;top:366px;width:344px;height:12px;background:#a1a9a9"></div><div class="a" style="left:523px;top:366px;width:678px;height:12px;background:#6b6b6b"></div><div class="a" style="left:139px;top:378px;width:40px;height:12px;background:#8a8a8a"></div><div class="a" style="left:179px;top:378px;width:344px;height:12px;background:#bcc4c5"></div><div class="a" style="left:523px;top:378px;width:678px;height:12px;background:#8a8a8a"></div><div class="a" style="left:139px;top:390px;width:40px;height:12px;background:#8a8a8a"></div><div class="a" style="left:179px;top:390px;width:344px;height:12px;background:#bcc4c5"></div><div class="a" style="left:523px;top:390px;width:678px;height:12px;background:#8a8a8a"></div><div class="a" style="left:139px;top:402px;width:40px;height:12px;background:#6b6b6b"></div><div class="a" style="left:179px;top:402px;width:344px;height:12px;background:#a1a9a9"></div><div class="a" style="left:523px;top:402px;width:678px;height:12px;background:#6b6b6b"></div><div class="a" style="left:139px;top:414px;width:40px;height:12px;background:#8a8a8a"></div><div class="a" style="left:179px;top:414px;width:344px;height:12px;background:#bcc4c5"></div><div class="a" style="left:523px;top:414px;width:678px;height:12px;background:#8a8a8a"></div><div class="a" style="left:139px;top:426px;width:40px;height:12px;background:#6b6b6b"></div><div class="a" style="left:179px;top:426px;width:344px;height:12px;background:#a1a9a9"></div><div class="a" style="left:523px;top:426px;width:678px;height:12px;background:#6b6b6b"></div><div class="a" style="left:139px;top:438px;width:40px;height:12px;background:#8a8a8a"></div><div class="a" style="left:179px;top:438px;width:344px;height:12px;background:#bcc4c5"></div><div class="a" style="left:523px;top:438px;width:678px;height:12px;background:#8a8a8a"></div><div class="a" style="left:139px;top:450px;width:40px;height:12px;background:#6b6b6b"></div><div class="a" style="left:179px;top:450px;width:344px;height:12px;background:#a1a9a9"></div><div class="a" style="left:523px;top:450px;width:678px;height:12px;background:#6b6b6b"></div><div class="a" style="left:139px;top:462px;width:40px;height:12px;background:#8a8a8a"></div><div class="a" style="left:179px;top:462px;width:344px;height:12px;background:#bcc4c5"></div><div class="a" style="left:523px;top:462px;width:678px;height:12px;background:#8a8a8a"></div><div class="a" style="left:139px;top:474px;width:40px;height:12px;background:#8a8a8a"></div><div class="a" style="left:179px;top:474px;width:344px;height:12px;background:#bcc4c5"></div><div class="a" style="left:523px;top:474px;width:678px;height:12px;background:#8a8a8a"></div><div class="a" style="left:139px;top:486px;width:40px;height:12px;background:#6b6b6b"></div><div class="a" style="left:179px;top:486px;width:344px;height:12px;background:#a1a9a9"></div><div class="a" style="left:523px;top:486px;width:678px;height:12px;background:#6b6b6b"></div><div class="a" style="left:139px;top:498px;width:40px;height:12px;background:#8a8a8a"></div><div class="a" style="left:179px;top:498px;width:344px;height:12px;background:#bcc4c5"></div><div class="a" style="left:523px;top:498px;width:678px;height:12px;background:#8a8a8a"></div><div class="a" style="left:139px;top:510px;width:40px;height:7px;background:#6b6b6b"></div><div class="a" style="left:179px;top:510px;width:344px;height:7px;background:#a1a9a9"></div><div class="a" style="left:523px;top:510px;width:678px;height:7px;background:#6b6b6b"></div><div class="a" style="left:139px;top:186px;width:40px;height:1px;background:#686868"></div><div class="a" style="left:179px;top:186px;width:344px;height:1px;background:#9ea6a7"></div><div class="a" style="left:523px;top:186px;width:678px;height:1px;background:#686868"></div><div class="a" style="left:139px;top:246px;width:1062px;height:1px;background:#8e1212"></div><div class="a" style="left:139px;top:330px;width:40px;height:1px;background:#686868"></div><div class="a" style="left:179px;top:330px;width:344px;height:1px;background:#9ea6a7"></div><div class="a" style="left:523px;top:330px;width:678px;height:1px;background:#686868"></div><div class="a" style="left:139px;top:390px;width:1062px;height:1px;background:#8e1212"></div><div class="a" style="left:139px;top:474px;width:40px;height:1px;background:#686868"></div><div class="a" style="left:179px;top:474px;width:344px;height:1px;background:#9ea6a7"></div><div class="a" style="left:523px;top:474px;width:678px;height:1px;background:#686868"></div><div class="a" style="left:169px;top:162px;width:10px;height:355px;background:linear-gradient(90deg,rgba(45,45,45,0),rgba(45,45,45,.5) 50%,rgba(40,40,40,.95))"></div><div class="a" style="left:523px;top:162px;width:9px;height:355px;background:linear-gradient(90deg,rgba(25,25,25,.95),rgba(40,40,40,.4) 50%,rgba(40,40,40,0))"></div><div class="a" style="left:222px;top:162px;width:1px;height:355px;background:#262626"></div><div class="a" style="left:265px;top:162px;width:1px;height:355px;background:#262626"></div><div class="a" style="left:308px;top:162px;width:1px;height:355px;background:#262626"></div><div class="a" style="left:351px;top:162px;width:1px;height:355px;background:#262626"></div><div class="a" style="left:394px;top:162px;width:1px;height:355px;background:#262626"></div><div class="a" style="left:437px;top:162px;width:1px;height:355px;background:#262626"></div><div class="a" style="left:480px;top:162px;width:1px;height:355px;background:#262626"></div><div class="a" style="left:522px;top:162px;width:1px;height:355px;background:#050505"></div><div class="a" style="left:565px;top:162px;width:1px;height:355px;background:#262626"></div><div class="a" style="left:608px;top:162px;width:1px;height:355px;background:#262626"></div><div class="a" style="left:651px;top:162px;width:1px;height:355px;background:#262626"></div><div class="a" style="left:694px;top:162px;width:1px;height:355px;background:#262626"></div><div class="a" style="left:737px;top:162px;width:1px;height:355px;background:#262626"></div><div class="a" style="left:780px;top:162px;width:1px;height:355px;background:#262626"></div><div class="a" style="left:823px;top:162px;width:1px;height:355px;background:#262626"></div><div class="a" style="left:866px;top:162px;width:1px;height:355px;background:#080808"></div><div class="a" style="left:909px;top:162px;width:1px;height:355px;background:#262626"></div><div class="a" style="left:952px;top:162px;width:1px;height:355px;background:#262626"></div><div class="a" style="left:995px;top:162px;width:1px;height:355px;background:#262626"></div><div class="a" style="left:1038px;top:162px;width:1px;height:355px;background:#262626"></div><div class="a" style="left:1081px;top:162px;width:1px;height:355px;background:#262626"></div><div class="a" style="left:1124px;top:162px;width:1px;height:355px;background:#262626"></div><div class="a" style="left:1167px;top:162px;width:1px;height:355px;background:#262626"></div><svg style="left:168px;top:150px;" width="23" height="13" viewBox="0 0 23 13"><path d="M1 1.5 H21 L11 11.5Z" fill="#8fa89a" stroke="#1c6a1c" stroke-width="1.5"/></svg><div class="a" style="left:139px;top:517px;width:1062px;height:9px;background:#6a6a6a;border-bottom:1px solid #3a3a3a"></div><svg style="left:141px;top:519px;" width="24" height="5" viewBox="0 0 24 5"><rect x="0" y="0" width="2" height="2" fill="#e8e8e8"/><rect x="3" y="0" width="2" height="2" fill="#e8e8e8"/><rect x="6" y="0" width="2" height="2" fill="#e8e8e8"/><rect x="9" y="0" width="2" height="2" fill="#e8e8e8"/><rect x="12" y="0" width="2" height="2" fill="#e8e8e8"/><rect x="15" y="0" width="2" height="2" fill="#e8e8e8"/><rect x="18" y="0" width="2" height="2" fill="#e8e8e8"/><rect x="21" y="0" width="2" height="2" fill="#e8e8e8"/><rect x="0" y="3" width="2" height="2" fill="#e8e8e8"/><rect x="3" y="3" width="2" height="2" fill="#e8e8e8"/><rect x="6" y="3" width="2" height="2" fill="#e8e8e8"/><rect x="9" y="3" width="2" height="2" fill="#e8e8e8"/><rect x="12" y="3" width="2" height="2" fill="#e8e8e8"/><rect x="15" y="3" width="2" height="2" fill="#e8e8e8"/><rect x="18" y="3" width="2" height="2" fill="#e8e8e8"/><rect x="21" y="3" width="2" height="2" fill="#e8e8e8"/></svg><svg style="left:1176px;top:519px;" width="24" height="5" viewBox="0 0 24 5"><rect x="0" y="0" width="2" height="2" fill="#e8e8e8"/><rect x="3" y="0" width="2" height="2" fill="#e8e8e8"/><rect x="6" y="0" width="2" height="2" fill="#e8e8e8"/><rect x="9" y="0" width="2" height="2" fill="#e8e8e8"/><rect x="12" y="0" width="2" height="2" fill="#e8e8e8"/><rect x="15" y="0" width="2" height="2" fill="#e8e8e8"/><rect x="18" y="0" width="2" height="2" fill="#e8e8e8"/><rect x="21" y="0" width="2" height="2" fill="#e8e8e8"/><rect x="0" y="3" width="2" height="2" fill="#e8e8e8"/><rect x="3" y="3" width="2" height="2" fill="#e8e8e8"/><rect x="6" y="3" width="2" height="2" fill="#e8e8e8"/><rect x="9" y="3" width="2" height="2" fill="#e8e8e8"/><rect x="12" y="3" width="2" height="2" fill="#e8e8e8"/><rect x="15" y="3" width="2" height="2" fill="#e8e8e8"/><rect x="18" y="3" width="2" height="2" fill="#e8e8e8"/><rect x="21" y="3" width="2" height="2" fill="#e8e8e8"/></svg><div class="a" style="left:10px;top:162px;width:127px;height:359px;background:#111;overflow:hidden"></div><div class="a" style="left:10px;top:227px;width:127px;height:20px;background:linear-gradient(90deg,#2b2b2b,#303030 50%,#363636);border-top:1px solid #626262;border-bottom:1px solid #050505;box-shadow:inset -1px 0 #555,inset 1px 0 #000,inset 2px 0 #3a3a3a"></div><div class="a" style="left:10px;top:207px;width:127px;height:20px;background:linear-gradient(90deg,#2b2b2b,#303030 50%,#363636);border-top:1px solid #626262;border-bottom:1px solid #050505;box-shadow:inset -1px 0 #555,inset 1px 0 #000,inset 2px 0 #3a3a3a"></div><div class="a" style="left:10px;top:187px;width:127px;height:20px;background:linear-gradient(90deg,#2b2b2b,#303030 50%,#363636);border-top:1px solid #626262;border-bottom:1px solid #050505;box-shadow:inset -1px 0 #555,inset 1px 0 #000,inset 2px 0 #3a3a3a"></div><div class="a" style="left:10px;top:166px;width:127px;height:21px;background:linear-gradient(90deg,#2b2b2b,#303030 50%,#363636);border-top:1px solid #626262;border-bottom:1px solid #050505;box-shadow:inset -1px 0 #555,inset 1px 0 #000,inset 2px 0 #3a3a3a"></div><div class="a" style="left:10px;top:162px;width:127px;height:4px;background:linear-gradient(90deg,#2b2b2b,#303030 50%,#363636);border-bottom:1px solid #050505;box-shadow:inset -1px 0 #555,inset 1px 0 #000,inset 2px 0 #3a3a3a"></div><div class="a" style="left:10px;top:371px;width:127px;height:20px;background:linear-gradient(90deg,#2b2b2b,#303030 50%,#363636);border-top:1px solid #626262;border-bottom:1px solid #050505;box-shadow:inset -1px 0 #555,inset 1px 0 #000,inset 2px 0 #3a3a3a"></div><div class="a" style="left:10px;top:351px;width:127px;height:20px;background:linear-gradient(90deg,#2b2b2b,#303030 50%,#363636);border-top:1px solid #626262;border-bottom:1px solid #050505;box-shadow:inset -1px 0 #555,inset 1px 0 #000,inset 2px 0 #3a3a3a"></div><div class="a" style="left:10px;top:331px;width:127px;height:20px;background:linear-gradient(90deg,#2b2b2b,#303030 50%,#363636);border-top:1px solid #626262;border-bottom:1px solid #050505;box-shadow:inset -1px 0 #555,inset 1px 0 #000,inset 2px 0 #3a3a3a"></div><div class="a" style="left:10px;top:310px;width:127px;height:21px;background:linear-gradient(90deg,#2b2b2b,#303030 50%,#363636);border-top:1px solid #626262;border-bottom:1px solid #050505;box-shadow:inset -1px 0 #555,inset 1px 0 #000,inset 2px 0 #3a3a3a"></div><div class="a" style="left:10px;top:289px;width:127px;height:21px;background:linear-gradient(90deg,#2b2b2b,#303030 50%,#363636);border-top:1px solid #626262;border-bottom:1px solid #050505;box-shadow:inset -1px 0 #555,inset 1px 0 #000,inset 2px 0 #3a3a3a"></div><div class="a" style="left:10px;top:268px;width:127px;height:21px;background:linear-gradient(90deg,#2b2b2b,#303030 50%,#363636);border-top:1px solid #626262;border-bottom:1px solid #050505;box-shadow:inset -1px 0 #555,inset 1px 0 #000,inset 2px 0 #3a3a3a"></div><div class="a" style="left:10px;top:247px;width:127px;height:21px;background:linear-gradient(90deg,#2b2b2b,#303030 50%,#363636);border-top:1px solid #626262;border-bottom:1px solid #050505;box-shadow:inset -1px 0 #555,inset 1px 0 #000,inset 2px 0 #3a3a3a"></div><div class="a" style="left:10px;top:515px;width:127px;height:6px;background:linear-gradient(90deg,#2b2b2b,#303030 50%,#363636);border-top:1px solid #626262;box-shadow:inset -1px 0 #555,inset 1px 0 #000,inset 2px 0 #3a3a3a"></div><div class="a" style="left:10px;top:495px;width:127px;height:20px;background:linear-gradient(90deg,#2b2b2b,#303030 50%,#363636);border-top:1px solid #626262;border-bottom:1px solid #050505;box-shadow:inset -1px 0 #555,inset 1px 0 #000,inset 2px 0 #3a3a3a"></div><div class="a" style="left:10px;top:475px;width:127px;height:20px;background:linear-gradient(90deg,#2b2b2b,#303030 50%,#363636);border-top:1px solid #626262;border-bottom:1px solid #050505;box-shadow:inset -1px 0 #555,inset 1px 0 #000,inset 2px 0 #3a3a3a"></div><div class="a" style="left:10px;top:454px;width:127px;height:21px;background:linear-gradient(90deg,#2b2b2b,#303030 50%,#363636);border-top:1px solid #626262;border-bottom:1px solid #050505;box-shadow:inset -1px 0 #555,inset 1px 0 #000,inset 2px 0 #3a3a3a"></div><div class="a" style="left:10px;top:433px;width:127px;height:21px;background:linear-gradient(90deg,#2b2b2b,#303030 50%,#363636);border-top:1px solid #626262;border-bottom:1px solid #050505;box-shadow:inset -1px 0 #555,inset 1px 0 #000,inset 2px 0 #3a3a3a"></div><div class="a" style="left:10px;top:412px;width:127px;height:21px;background:linear-gradient(90deg,#2b2b2b,#303030 50%,#363636);border-top:1px solid #626262;border-bottom:1px solid #050505;box-shadow:inset -1px 0 #555,inset 1px 0 #000,inset 2px 0 #3a3a3a"></div><div class="a" style="left:10px;top:391px;width:127px;height:21px;background:linear-gradient(90deg,#2b2b2b,#303030 50%,#363636);border-top:1px solid #626262;border-bottom:1px solid #050505;box-shadow:inset -1px 0 #555,inset 1px 0 #000,inset 2px 0 #3a3a3a"></div><div class="a" style="left:137px;top:162px;width:1px;height:359px;background:#0a0a0a"></div><div class="a" style="left:10px;top:162px;width:72px;height:13px;background:linear-gradient(90deg,#c85050,#e06868 35%,#eca898 65%,#f2d4c0 88%,#f4dcc8);border-bottom:1px solid #f6dccc;box-shadow:1px 0 0 #000,2px 2px 3px rgba(0,0,0,.6),inset 1px 0 0 #111,inset -3px 0 0 #e48a8a,inset -4px 0 0 #fff2e4"></div><div class="a" style="left:10px;top:197px;width:73px;height:15px;background:linear-gradient(90deg,#8a8a8a,#9e9e9e 25%,#8c8c8c 70%,#6e6e6e);border-top:1px solid #b4b4b4;border-bottom:1px solid #b0b0b0;box-shadow:2px 2px 3px rgba(0,0,0,.6),inset -1px 0 0 #a0a0a0,inset -4px 0 0 #888,inset -5px 0 0 #c8c8c8"></div><div class="a" style="left:10px;top:221px;width:73px;height:15px;background:linear-gradient(90deg,#8a8a8a,#9e9e9e 25%,#8c8c8c 70%,#6e6e6e);border-top:1px solid #b4b4b4;border-bottom:1px solid #b0b0b0;box-shadow:2px 2px 3px rgba(0,0,0,.6),inset -1px 0 0 #a0a0a0,inset -4px 0 0 #888,inset -5px 0 0 #c8c8c8"></div><div class="a" style="left:10px;top:257px;width:73px;height:15px;background:linear-gradient(90deg,#8a8a8a,#9e9e9e 25%,#8c8c8c 70%,#6e6e6e);border-top:1px solid #b4b4b4;border-bottom:1px solid #b0b0b0;box-shadow:2px 2px 3px rgba(0,0,0,.6),inset -1px 0 0 #a0a0a0,inset -4px 0 0 #888,inset -5px 0 0 #c8c8c8"></div><div class="a" style="left:10px;top:281px;width:73px;height:15px;background:linear-gradient(90deg,#8a8a8a,#9e9e9e 25%,#8c8c8c 70%,#6e6e6e);border-top:1px solid #b4b4b4;border-bottom:1px solid #b0b0b0;box-shadow:2px 2px 3px rgba(0,0,0,.6),inset -1px 0 0 #a0a0a0,inset -4px 0 0 #888,inset -5px 0 0 #c8c8c8"></div><div class="a" style="left:10px;top:305px;width:73px;height:15px;background:linear-gradient(90deg,#8a8a8a,#9e9e9e 25%,#8c8c8c 70%,#6e6e6e);border-top:1px solid #b4b4b4;border-bottom:1px solid #b0b0b0;box-shadow:2px 2px 3px rgba(0,0,0,.6),inset -1px 0 0 #a0a0a0,inset -4px 0 0 #888,inset -5px 0 0 #c8c8c8"></div><div class="a" style="left:10px;top:341px;width:73px;height:15px;background:linear-gradient(90deg,#8a8a8a,#9e9e9e 25%,#8c8c8c 70%,#6e6e6e);border-top:1px solid #b4b4b4;border-bottom:1px solid #b0b0b0;box-shadow:2px 2px 3px rgba(0,0,0,.6),inset -1px 0 0 #a0a0a0,inset -4px 0 0 #888,inset -5px 0 0 #c8c8c8"></div><div class="a" style="left:10px;top:365px;width:73px;height:15px;background:linear-gradient(90deg,#8a8a8a,#9e9e9e 25%,#8c8c8c 70%,#6e6e6e);border-top:1px solid #b4b4b4;border-bottom:1px solid #b0b0b0;box-shadow:2px 2px 3px rgba(0,0,0,.6),inset -1px 0 0 #a0a0a0,inset -4px 0 0 #888,inset -5px 0 0 #c8c8c8"></div><div class="a" style="left:10px;top:401px;width:73px;height:15px;background:linear-gradient(90deg,#8a8a8a,#9e9e9e 25%,#8c8c8c 70%,#6e6e6e);border-top:1px solid #b4b4b4;border-bottom:1px solid #b0b0b0;box-shadow:2px 2px 3px rgba(0,0,0,.6),inset -1px 0 0 #a0a0a0,inset -4px 0 0 #888,inset -5px 0 0 #c8c8c8"></div><div class="a" style="left:10px;top:425px;width:73px;height:15px;background:linear-gradient(90deg,#8a8a8a,#9e9e9e 25%,#8c8c8c 70%,#6e6e6e);border-top:1px solid #b4b4b4;border-bottom:1px solid #b0b0b0;box-shadow:2px 2px 3px rgba(0,0,0,.6),inset -1px 0 0 #a0a0a0,inset -4px 0 0 #888,inset -5px 0 0 #c8c8c8"></div><div class="a" style="left:10px;top:449px;width:73px;height:15px;background:linear-gradient(90deg,#8a8a8a,#9e9e9e 25%,#8c8c8c 70%,#6e6e6e);border-top:1px solid #b4b4b4;border-bottom:1px solid #b0b0b0;box-shadow:2px 2px 3px rgba(0,0,0,.6),inset -1px 0 0 #a0a0a0,inset -4px 0 0 #888,inset -5px 0 0 #c8c8c8"></div><div class="a" style="left:10px;top:485px;width:73px;height:15px;background:linear-gradient(90deg,#8a8a8a,#9e9e9e 25%,#8c8c8c 70%,#6e6e6e);border-top:1px solid #b4b4b4;border-bottom:1px solid #b0b0b0;box-shadow:2px 2px 3px rgba(0,0,0,.6),inset -1px 0 0 #a0a0a0,inset -4px 0 0 #888,inset -5px 0 0 #c8c8c8"></div><div class="a" style="left:10px;top:509px;width:73px;height:12px;background:linear-gradient(90deg,#8a8a8a,#9e9e9e 25%,#8c8c8c 70%,#6e6e6e);border-top:1px solid #b4b4b4;box-shadow:2px 2px 3px rgba(0,0,0,.6),inset -1px 0 0 #a0a0a0,inset -4px 0 0 #888,inset -5px 0 0 #c8c8c8"></div><div class="t" style="left:122.80px;top:231.00px;font-size:11.93px;font-family:'Liberation Sans',sans-serif;font-weight:normal;font-style:normal;color:#f0f0f0;transform:scaleX(0.807);transform-origin:0 0;">C3</div><div class="t" style="left:122.80px;top:375.00px;font-size:11.93px;font-family:'Liberation Sans',sans-serif;font-weight:normal;font-style:normal;color:#f0f0f0;transform:scaleX(0.807);transform-origin:0 0;">C2</div><div class="a" style="left:10px;top:521px;width:128px;height:8px;background:#cbcbcb;border-top:1px solid #8e8e8e"></div><div class="a" style="left:126px;top:519px;width:2px;height:2px;background:#ddd"></div><div class="a" style="left:131px;top:520px;width:1px;height:1px;background:#ddd"></div><div class="a" style="left:139px;top:526px;width:1062px;height:151px;background:#cacaca"></div><div class="a" style="left:139px;top:544px;width:1062px;height:1px;background:#8c8c8c"></div><div class="a" style="left:139px;top:563px;width:1062px;height:1px;background:#8c8c8c"></div><div class="a" style="left:139px;top:582px;width:1062px;height:1px;background:#8c8c8c"></div><div class="a" style="left:139px;top:601px;width:1062px;height:1px;background:#8c8c8c"></div><div class="a" style="left:139px;top:620px;width:1062px;height:1px;background:#8c8c8c"></div><div class="a" style="left:139px;top:639px;width:1062px;height:1px;background:#8c8c8c"></div><div class="a" style="left:139px;top:658px;width:1062px;height:1px;background:#8c8c8c"></div><div class="a" style="left:222px;top:526px;width:1px;height:151px;background:#333"></div><div class="a" style="left:265px;top:526px;width:1px;height:151px;background:#333"></div><div class="a" style="left:308px;top:526px;width:1px;height:151px;background:#333"></div><div class="a" style="left:351px;top:526px;width:1px;height:151px;background:#333"></div><div class="a" style="left:394px;top:526px;width:1px;height:151px;background:#333"></div><div class="a" style="left:437px;top:526px;width:1px;height:151px;background:#333"></div><div class="a" style="left:480px;top:526px;width:1px;height:151px;background:#333"></div><div class="a" style="left:522px;top:526px;width:1px;height:151px;background:#0a0a0a"></div><div class="a" style="left:565px;top:526px;width:1px;height:151px;background:#333"></div><div class="a" style="left:608px;top:526px;width:1px;height:151px;background:#333"></div><div class="a" style="left:651px;top:526px;width:1px;height:151px;background:#333"></div><div class="a" style="left:694px;top:526px;width:1px;height:151px;background:#333"></div><div class="a" style="left:737px;top:526px;width:1px;height:151px;background:#333"></div><div class="a" style="left:780px;top:526px;width:1px;height:151px;background:#333"></div><div class="a" style="left:823px;top:526px;width:1px;height:151px;background:#333"></div><div class="a" style="left:866px;top:526px;width:1px;height:151px;background:#0a0a0a"></div><div class="a" style="left:909px;top:526px;width:1px;height:151px;background:#333"></div><div class="a" style="left:952px;top:526px;width:1px;height:151px;background:#333"></div><div class="a" style="left:995px;top:526px;width:1px;height:151px;background:#333"></div><div class="a" style="left:1038px;top:526px;width:1px;height:151px;background:#333"></div><div class="a" style="left:1081px;top:526px;width:1px;height:151px;background:#333"></div><div class="a" style="left:1124px;top:526px;width:1px;height:151px;background:#333"></div><div class="a" style="left:1167px;top:526px;width:1px;height:151px;background:#333"></div><div class="a" style="left:179px;top:162px;width:1px;height:515px;background:#0b5c0b"></div><div class="a" style="left:12px;top:656px;width:113px;height:21px;background:linear-gradient(#f4f4f4,#e6e6e6);border:1px solid #adadad"></div><div class="t" style="left:16.00px;top:660.59px;font-size:12.30px;font-family:'Liberation Sans',sans-serif;font-weight:normal;font-style:normal;color:#000;transform:scaleX(0.884);transform-origin:0 0;">Velocity</div><svg style="left:113.5px;top:664px;" width="8" height="6" viewBox="0 0 8 6"><path d="M0.8 0.8 L4 4.6 L7.2 0.8" stroke="#444" stroke-width="1.9" fill="none"/></svg><div class="a" style="left:128px;top:667px;width:9px;height:9px;border:1px solid #222;background:#d0d0d0"></div><svg style="left:128px;top:667px;" width="9" height="9" viewBox="0 0 9 9"><path d="M4.5 2v5M2 4.5h5" stroke="#111" stroke-width="1"/></svg><div class="a" style="left:1201px;top:162px;width:17px;height:515px;background:#2b2b2b"></div><div class="a" style="left:1201px;top:677px;width:18px;height:17px;background:#aaaaaa"></div><div class="a" style="left:1202px;top:390px;width:15px;height:100px;background:#4a4a4a;border:1px solid #0d0d0d;box-shadow:inset 0 1px #5a5a5a"></div><svg style="left:1202.2px;top:163.3px;" width="14" height="14" viewBox="0 0 14 14"><circle cx="7" cy="7" r="5.9" fill="#474747" stroke="#0c0c0c" stroke-width="1.3"/><path d="M7 4.5 L10 9 L4 9Z" fill="#9a9a9a"/></svg><svg style="left:1202.5px;top:624px;" width="14" height="14" viewBox="0 0 14 14"><circle cx="7" cy="7" r="5.9" fill="#474747" stroke="#0c0c0c" stroke-width="1.3"/><path d="M7 9.5 L10 5 L4 5Z" fill="#9a9a9a"/></svg><svg style="left:1202.5px;top:640.5px;" width="14" height="14" viewBox="0 0 14 14"><circle cx="7" cy="7" r="5.9" fill="#474747" stroke="#0c0c0c" stroke-width="1.3"/><path d="M7 3.2v7.6M3.2 7h7.6" stroke="#a8a8a8" stroke-width="1"/></svg><div class="a" style="left:1205px;top:657px;width:9px;height:2px;background:#666"></div><svg style="left:1202.5px;top:661px;" width="14" height="14" viewBox="0 0 14 14"><circle cx="7" cy="7" r="5.9" fill="#474747" stroke="#0c0c0c" stroke-width="1.3"/><path d="M3.2 7h7.6" stroke="#a8a8a8" stroke-width="1"/></svg><div class="a" style="left:139px;top:677px;width:1062px;height:17px;background:#2b2b2b"></div><svg style="left:140.5px;top:678.5px;" width="14" height="14" viewBox="0 0 14 14"><circle cx="7" cy="7" r="5.9" fill="#474747" stroke="#0c0c0c" stroke-width="1.3"/><path d="M4.5 7 L9 4 L9 10Z" fill="#9a9a9a"/></svg><div class="a" style="left:156px;top:678px;width:982px;height:15px;background:#4a4a4a;border:1px solid #0d0d0d;border-radius:2px;box-shadow:inset 0 1px #5a5a5a"></div><svg style="left:1147.5px;top:678.5px;" width="14" height="14" viewBox="0 0 14 14"><circle cx="7" cy="7" r="5.9" fill="#474747" stroke="#0c0c0c" stroke-width="1.3"/><path d="M9.5 7 L5 4 L5 10Z" fill="#9a9a9a"/></svg><svg style="left:1164.5px;top:678.5px;" width="14" height="14" viewBox="0 0 14 14"><circle cx="7" cy="7" r="5.9" fill="#474747" stroke="#0c0c0c" stroke-width="1.3"/><path d="M7 3.2v7.6M3.2 7h7.6" stroke="#a8a8a8" stroke-width="1"/></svg><div class="a" style="left:1181px;top:681px;width:2px;height:9px;background:#666"></div><svg style="left:1185px;top:678.5px;" width="14" height="14" viewBox="0 0 14 14"><circle cx="7" cy="7" r="5.9" fill="#474747" stroke="#0c0c0c" stroke-width="1.3"/><path d="M3.2 7h7.6" stroke="#a8a8a8" stroke-width="1"/></svg><div class="a" style="left:8px;top:694px;width:1437px;height:28px;background:#aaaaaa"></div><div class="a" style="left:10px;top:697px;width:144px;height:22px;background:linear-gradient(#5c5c5c,#555 50%,#4a4a4a 52%,#444);border:1px solid #262626;border-radius:3px"></div><div class="a" style="left:34px;top:698px;width:1px;height:20px;background:#2f2f2f"></div><div class="a" style="left:58px;top:698px;width:1px;height:20px;background:#2f2f2f"></div><div class="a" style="left:82px;top:698px;width:1px;height:20px;background:#2f2f2f"></div><div class="a" style="left:106px;top:698px;width:1px;height:20px;background:#2f2f2f"></div><div class="a" style="left:130px;top:698px;width:1px;height:20px;background:#2f2f2f"></div><svg style="left:10px;top:697px;" width="143" height="22" viewBox="0 0 143 22"><rect x="7" y="6" width="2" height="10" fill="#2b2b2b"/><path d="M9 11 L18 6 L18 16Z" fill="#2b2b2b"/><path d="M32 6 L41 11 L32 16Z" fill="#2b2b2b"/><rect x="56" y="6" width="3" height="10" fill="#2b2b2b"/><rect x="61" y="6" width="3" height="10" fill="#2b2b2b"/><rect x="79" y="6" width="10" height="10" fill="#2b2b2b"/><path d="M103 6 L112 11 L103 16Z" fill="#2b2b2b"/><rect x="112" y="6" width="2" height="10" fill="#2b2b2b"/><path d="M128.6 11.5 A4.8 4.8 0 0 1 133.4 6.7 H134.5" stroke="#2b2b2b" stroke-width="2.2" fill="none"/><path d="M134 3.6 L138.4 6.9 L134 10.2Z" fill="#2b2b2b"/><path d="M137.8 10.5 A4.8 4.8 0 0 1 133 15.3 H131.9" stroke="#2b2b2b" stroke-width="2.2" fill="none"/><path d="M132.4 12 L128 15.3 L132.4 18.6Z" fill="#2b2b2b"/></svg><div class="t" style="left:167.60px;top:701.59px;font-size:12.30px;font-family:'Liberation Sans',sans-serif;font-weight:normal;font-style:normal;color:#333;transform:scaleX(0.825);transform-origin:0 0;">Grid:</div><div class="a" style="left:198px;top:698px;width:61px;height:19px;background:#fff"></div><div class="a" style="left:200px;top:700px;width:40px;height:15px;background:#b9bdbd"></div><div class="t" style="left:201.00px;top:701.79px;font-size:12.30px;font-family:'Liberation Sans',sans-serif;font-weight:normal;font-style:normal;color:#333;transform:scaleX(0.936);transform-origin:0 0;">1/8</div><svg style="left:247px;top:705px;" width="8" height="6" viewBox="0 0 8 6"><path d="M0.8 0.8 L4 4.6 L7.2 0.8" stroke="#444" stroke-width="1.9" fill="none"/></svg><div class="a" style="left:265px;top:698px;width:58px;height:19px;background:#e9e9e9"></div><div class="t" style="left:267.50px;top:701.79px;font-size:12.30px;font-family:'Liberation Sans',sans-serif;font-weight:normal;font-style:normal;color:#000;transform:scaleX(0.830);transform-origin:0 0;">straight</div><svg style="left:311px;top:705px;" width="8" height="6" viewBox="0 0 8 6"><path d="M0.8 0.8 L4 4.6 L7.2 0.8" stroke="#444" stroke-width="1.9" fill="none"/></svg><div class="t" style="left:334.40px;top:701.59px;font-size:12.30px;font-family:'Liberation Sans',sans-serif;font-weight:normal;font-style:normal;color:#333;transform:scaleX(0.850);transform-origin:0 0;">Notes:</div><div class="a" style="left:373px;top:698px;width:52px;height:19px;background:#fff"></div><div class="a" style="left:375px;top:700px;width:31px;height:15px;background:#b9bdbd"></div><div class="t" style="left:375.00px;top:701.79px;font-size:12.30px;font-family:'Liberation Sans',sans-serif;font-weight:normal;font-style:normal;color:#333;transform:scaleX(0.774);transform-origin:0 0;">Grid</div><svg style="left:413px;top:705px;" width="8" height="6" viewBox="0 0 8 6"><path d="M0.8 0.8 L4 4.6 L7.2 0.8" stroke="#444" stroke-width="1.9" fill="none"/></svg><div class="a" style="left:440px;top:701px;width:13px;height:13px;background:#f6f6f6;border-top:1px solid #707070;border-left:1px solid #707070;border-right:1px solid #fff;border-bottom:1px solid #fff;box-shadow:inset 1px 1px #b8b8b8"></div><div class="t" style="left:458.60px;top:701.59px;font-size:12.30px;font-family:'Liberation Sans',sans-serif;font-weight:normal;font-style:normal;color:#333;transform:scaleX(0.831);transform-origin:0 0;">Key snap</div><div class="t" style="left:515.80px;top:701.59px;font-size:12.30px;font-family:'Liberation Sans',sans-serif;font-weight:normal;font-style:normal;color:#333;transform:scaleX(0.808);transform-origin:0 0;">Color:</div><div class="a" style="left:552px;top:698px;width:81px;height:19px;background:#e9e9e9"></div><div class="t" style="left:554.90px;top:701.79px;font-size:12.30px;font-family:'Liberation Sans',sans-serif;font-weight:normal;font-style:normal;color:#000;transform:scaleX(0.858);transform-origin:0 0;">Velocity</div><svg style="left:621px;top:705px;" width="8" height="6" viewBox="0 0 8 6"><path d="M0.8 0.8 L4 4.6 L7.2 0.8" stroke="#444" stroke-width="1.9" fill="none"/></svg><div class="a" style="left:1262px;top:698px;width:87px;height:19px;background:#e9e9e9"></div><div class="t" style="left:1266.00px;top:701.79px;font-size:12.30px;font-family:'Liberation Sans',sans-serif;font-weight:normal;font-style:normal;color:#000;transform:scaleX(0.912);transform-origin:0 0;">Track 2</div><svg style="left:1337px;top:705px;" width="8" height="6" viewBox="0 0 8 6"><path d="M0.8 0.8 L4 4.6 L7.2 0.8" stroke="#444" stroke-width="1.9" fill="none"/></svg><div class="a" style="left:1354px;top:698px;width:87px;height:19px;background:#e9e9e9"></div><div class="t" style="left:1358.00px;top:701.79px;font-size:12.30px;font-family:'Liberation Sans',sans-serif;font-weight:normal;font-style:normal;color:#000;transform:scaleX(0.844);transform-origin:0 0;">All channels</div><svg style="left:1429px;top:705px;" width="8" height="6" viewBox="0 0 8 6"><path d="M0.8 0.8 L4 4.6 L7.2 0.8" stroke="#444" stroke-width="1.9" fill="none"/></svg><div class="a" style="left:1225px;top:98px;width:217px;height:18px;background:#4d4d4d;border:1px solid #1e1e1e"></div><svg style="left:1228px;top:101px;" width="13" height="13" viewBox="0 0 13 13"><path d="M6.5 0.8 L12.2 6.5 L6.5 12.2 L0.8 6.5Z" fill="#fff" stroke="#111" stroke-width="0.8"/><path d="M6.5 3.5v6M3.5 6.5h6" stroke="#000" stroke-width="1.2"/></svg><div class="t" style="left:1311.90px;top:101.37px;font-size:11.5px;color:#eee;letter-spacing:0.000px;">2</div><div class="a" style="left:1325px;top:101px;width:12px;height:12px;background:#ff5b1f"></div><div class="a" style="left:1339px;top:99px;width:1px;height:16px;background:#222"></div><div class="a" style="left:1356px;top:99px;width:1px;height:16px;background:#222"></div><div class="a" style="left:1373px;top:99px;width:1px;height:16px;background:#222"></div><div class="a" style="left:1390px;top:99px;width:1px;height:16px;background:#222"></div><div class="a" style="left:1407px;top:99px;width:1px;height:16px;background:#222"></div><div class="a" style="left:1424px;top:99px;width:1px;height:16px;background:#222"></div><svg style="left:1338px;top:97px;" width="18" height="20" viewBox="0 0 18 20"><path d="M4 3.2 H8.8 Q11.3 3.2 11.3 6 V8" stroke="#f0e8dc" stroke-width="1.9" fill="none"/><path d="M8.3 7.6 L11.3 12.8 L14.3 7.6Z" fill="#f0e8dc"/><rect x="5.8" y="14.2" width="10.2" height="1.9" fill="#f0e8dc"/></svg><svg style="left:1355px;top:97px;" width="18" height="20" viewBox="0 0 18 20"><path d="M4.9 14.6 L11.8 9.1 V14.6Z" fill="#1c1c1c"/><path d="M4.9 14.6 V9.1 H11.8Z" fill="#474747"/><path d="M11.8 9 Q12.2 5.2 14.5 5.2 Q16.3 5.4 16.2 8.8" stroke="#222" stroke-width="1.1" fill="none"/></svg><svg style="left:1372px;top:97px;" width="18" height="20" viewBox="0 0 18 20"><path d="M4.3 9.9 Q9.8 4.5 15.3 9.9 Q9.8 15.3 4.3 9.9Z" fill="none" stroke="#444" stroke-width="1.2"/><path d="M9.6 5.6 Q13.6 6.3 15.2 9.9 Q13.6 13.4 9.6 14.2Z" fill="#141414"/><path d="M9.6 8 Q11.5 8.6 11.8 9.9 Q11.5 11.3 9.6 11.8Z" fill="#474747"/></svg><svg style="left:1389px;top:97px;" width="18" height="20" viewBox="0 0 18 20"><circle cx="10" cy="9.9" r="5" fill="#474747"/></svg><div class="t" style="left:1411.70px;top:100.56px;font-size:12.22px;font-family:'Liberation Sans',sans-serif;font-weight:normal;font-style:normal;color:#474747;transform:scaleX(0.796);transform-origin:0 0;">M</div><div class="t" style="left:1429.60px;top:100.56px;font-size:12.22px;font-family:'Liberation Sans',sans-serif;font-weight:normal;font-style:normal;color:#474747;transform:scaleX(0.809);transform-origin:0 0;">S</div></body></html>
